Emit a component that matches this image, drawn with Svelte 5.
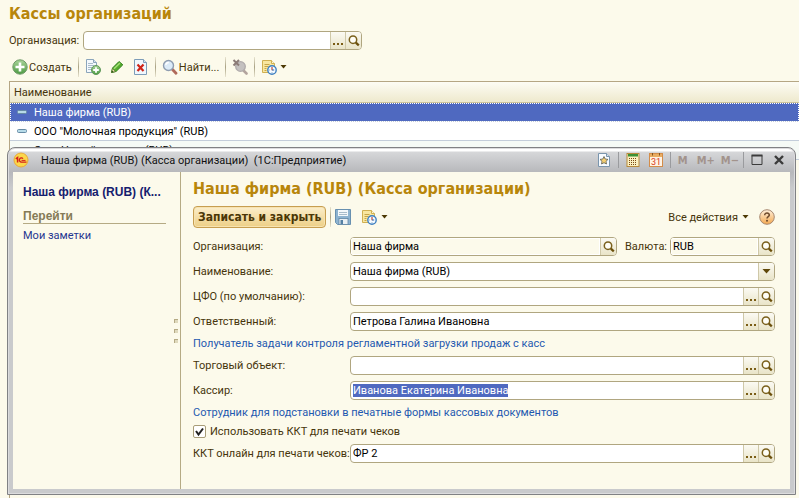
<script>
  import { onMount } from 'svelte';

  const cashDesks = ['Наша фирма (RUB)', 'ООО "Молочная продукция" (RUB)', 'Сеть Новый магазин (RUB)'];

  let filter = $state('');
  let selected = $state(0);
  let useKkt = $state(true);
  let form = $state({
    org: 'Наша фирма',
    currency: 'RUB',
    name: 'Наша фирма (RUB)',
    cfo: '',
    owner: 'Петрова Галина Ивановна',
    shop: '',
    cashier: 'Иванова Екатерина Ивановна',
    kkt: 'ФР 2'
  });

  onMount(() => {
    const el = document.getElementById('cashier');
    el.focus();
    el.select();
  });
</script>

{#snippet lens()}
  <svg width="12" height="12" viewBox="0 0 12 12" aria-hidden="true">
    <circle cx="5" cy="4.7" r="3.7" fill="#fffef6" stroke="#7a601c" stroke-width="1.5" />
    <path d="M7.8 7.6 10.8 10.4" stroke="#6b4f0a" stroke-width="2.2" />
  </svg>
{/snippet}

{#snippet arrow()}
  <svg class="arrow" width="7" height="4" viewBox="0 0 7 4" aria-hidden="true"><path d="M0.5 0h6L3.5 3.5z" fill="#4d3905" /></svg>
{/snippet}

{#snippet scheduleIcon()}
  <svg width="16" height="16" viewBox="0 0 16 16" aria-hidden="true">
    <path d="M1.5 1.5h9l3 3v9h-12z" fill="#f8e7a0" stroke="#d0b052" />
    <path d="M10.5 1.5v3h3" fill="#fff8d8" stroke="#d0b052" />
    <path d="M3.5 5.5h5M3.5 7.5h4M3.5 9.5h2M3.5 11.5h2" stroke="#c6a548" />
    <circle cx="11" cy="11" r="4.2" fill="#f4faff" stroke="#3d7fc0" stroke-width="1.4" />
    <path d="M11 8v3.300" fill="none" stroke="#c0493a" stroke-width="1.200" />
    <path d="M11 11h2.200" stroke="#2d67a8" />
    <path d="M8 11h1M11 13v1" stroke="#9ab8d6" />
  </svg>
{/snippet}

{#snippet field(id, key, mode)}
  <div class="field" class:locked={mode === 'locked'}>
    <input {id} type="text" bind:value={form[key]} readonly={mode === 'locked'} autocomplete="off" spellcheck="false" />
    {#if mode === 'full'}
      <button type="button" class="pick" aria-label="Выбрать"><i></i><i></i><i></i></button>
    {/if}
    {#if mode === 'list'}
      <button type="button" class="drop" aria-label="Список">
        <svg width="9" height="5" viewBox="0 0 9 5" aria-hidden="true"><path d="M0.5 0h8L4.5 4.5z" fill="#5f4708" /></svg>
      </button>
    {:else}
      <button type="button" class="open" aria-label="Открыть">{@render lens()}</button>
    {/if}
  </div>
{/snippet}

<div class="page">
  <h1>Кассы организаций</h1>

  <div class="filter">
    <label for="filter">Организация:</label>
    <div class="field">
      <input id="filter" type="text" bind:value={filter} autocomplete="off" />
      <button type="button" class="pick" aria-label="Выбрать"><i></i><i></i><i></i></button>
      <button type="button" class="open" aria-label="Открыть">{@render lens()}</button>
    </div>
  </div>

  <div class="toolbar">
    <button type="button" class="tool">
      <svg width="16" height="16" viewBox="0 0 16 16" aria-hidden="true">
        <defs>
          <linearGradient id="green" x1="0" y1="0" x2="0" y2="1"><stop offset="0" stop-color="#a9d49a" /><stop offset="1" stop-color="#4c9a41" /></linearGradient>
        </defs>
        <circle cx="8" cy="8" r="7.2" fill="url(#green)" stroke="#6f9a68" />
        <path d="M8 3.5v9M3.5 8h9" stroke="#fff" stroke-width="2.6" />
      </svg>
      Создать
    </button>
    <span class="sep"></span>
    <button type="button" class="tool" aria-label="Скопировать">
      <svg width="16" height="16" viewBox="0 0 16 16" aria-hidden="true">
        <path d="M1.5 .5h7l3 3v10h-10z" fill="#f4f9fd" stroke="#8ba5bb" />
        <path d="M8.5 .5v3h3" fill="#d5e4ef" stroke="#8ba5bb" />
        <path d="M3 4.5h5M3 6.5h6M3 8.5h4M3 10.5h3" stroke="#a9bccb" />
        <circle cx="11" cy="11" r="4.5" fill="url(#green)" stroke="#5f985a" />
        <path d="M11 8.2v5.6M8.2 11h5.6" stroke="#fff" stroke-width="1.8" />
      </svg>
    </button>
    <button type="button" class="tool" aria-label="Изменить">
      <svg width="16" height="16" viewBox="0 0 16 16" aria-hidden="true">
        <path d="M2.500 13.500 3.500 9 10 2.500l3.800 3.300L7 12.500z" fill="#54ab2c" stroke="#2f7f1c" />
        <path d="M5 9.800 11 4" stroke="#a5df78" stroke-width="1.500" />
        <path d="M2.500 13.500 3.500 9.500 6.500 12.500z" fill="#eadfae" stroke="#5c7a32" stroke-width=".7" />
        <path d="m2.500 13.500.5-2 1.500 1.500z" fill="#26460f" />
      </svg>
    </button>
    <button type="button" class="tool" aria-label="Удалить">
      <svg width="16" height="16" viewBox="0 0 16 16" aria-hidden="true">
        <path d="M1.5 .5h9l3 3v12h-12z" fill="#f0f7fd" stroke="#7d9cb8" />
        <path d="M10.5 .5v3h3" fill="#d5e4ef" stroke="#7d9cb8" />
        <path d="m4.5 5.5 6 6.500m0-6.500-6 6.500" stroke="#cf2418" stroke-width="2.200" />
      </svg>
    </button>
    <span class="sep"></span>
    <button type="button" class="tool">
      <svg width="16" height="16" viewBox="0 0 16 16" aria-hidden="true">
        <path d="m10.500 10.500 3.500 3.700" stroke="#b06a5a" stroke-width="2.800" stroke-linecap="round" />
        <circle cx="6.500" cy="6.500" r="5" fill="#dcebf8" stroke="#8f9db0" stroke-width="1.400" />
        <path d="M3.800 6a3 3 0 0 1 3-2.500" stroke="#fff" stroke-width="1.300" fill="none" />
      </svg>
      Найти...
    </button>
    <span class="sep"></span>
    <button type="button" class="tool" aria-label="Отменить поиск">
      <svg width="16" height="16" viewBox="0 0 16 16" aria-hidden="true">
        <path d="m11 11 3.500 3.500" stroke="#b3a49e" stroke-width="2.600" stroke-linecap="round" />
        <circle cx="8.500" cy="7.500" r="4.800" fill="#c4c1c0" stroke="#b0abab" stroke-width="1.300" />
        <path d="m1.500 1 5.500 5.500m0-5.500-5.500 5.500" stroke="#8b7b77" stroke-width="2" />
      </svg>
    </button>
    <span class="sep"></span>
    <button type="button" class="tool" aria-label="Настройки списка">{@render scheduleIcon()}{@render arrow()}</button>
  </div>

  <div class="list">
    <table>
      <thead><tr><th>Наименование</th></tr></thead>
      <tbody>
        {#each cashDesks as desk, i}
          <tr class:selected={selected === i} onclick={() => (selected = i)}>
            <td>
              <span class="cell">
                <svg width="10" height="4" viewBox="0 0 10 4" aria-hidden="true"><rect x=".5" y=".5" width="9" height="3" rx="1" fill="#b7dbe8" stroke="#668ba5" /></svg>
                {desk}
              </span>
            </td>
          </tr>
        {/each}
      </tbody>
    </table>
  </div>

  <section class="window" aria-label="Касса организации">
    <header>
      <svg class="logo" width="16" height="16" viewBox="0 0 16 16" aria-hidden="true">
        <circle cx="8" cy="8" r="7" fill="#fbd74a" stroke="#e8a93c" />
        <path d="M2.8 6.800 4.600 5.500v5" fill="none" stroke="#d3201c" stroke-width="1.500" />
        <path d="M10 6.600a2.100 2.100 0 1 0-1.500 3.500h5" fill="none" stroke="#d3201c" stroke-width="1.400" />
        <path d="M8.500 8.400h4" stroke="#d3201c" />
      </svg>
      <span class="caption">Наша фирма (RUB) (Касса организации)&nbsp; (1С:Предприятие)</span>
      <button type="button" class="tool" aria-label="В избранное">
        <svg width="14" height="14" viewBox="0 0 14 14" aria-hidden="true">
          <path d="M1.5 .5h8l3 3v10h-11z" fill="#f7fbff" stroke="#7a95ad" />
          <path d="M9.5 .5v3h3" fill="#d5e4ef" stroke="#7a95ad" />
          <path d="m7 3.500 1.200 2.500 2.800.4-2 1.900.5 2.700L7 9.700 4.500 11 5 8.300l-2-1.900 2.800-.4z" fill="#f5cf72" stroke="#5b5d55" stroke-width=".8" />
        </svg>
      </button>
      <span class="sep dark"></span>
      <button type="button" class="tool" aria-label="Калькулятор">
        <svg width="14" height="14" viewBox="0 0 14 14" aria-hidden="true">
          <rect x="1" y=".5" width="12" height="13" fill="#fbf0c0" stroke="#b88a3a" />
          <rect x="2" y="1" width="10" height="2.500" fill="#3c9136" />
          <path d="M3 5.500h8M3 7.500h8M3 9.500h8M3 11.500h8" stroke="#7a4a12" stroke-dasharray="1 1" stroke-width="1.100" />
        </svg>
      </button>
      <button type="button" class="tool" aria-label="Календарь">
        <svg width="14" height="14" viewBox="0 0 14 14" aria-hidden="true">
          <rect x=".5" y=".5" width="13" height="13" fill="#fff3e4" stroke="#d38c49" />
          <rect x="1" y="1" width="12" height="3" fill="#e9ad63" />
          <path d="M3.500 0v2.500M10.500 0v2.500" stroke="#7d5220" />
          <text x="7" y="12" text-anchor="middle" font-size="9" fill="#d83a20">31</text>
        </svg>
      </button>
      <span class="sep dark"></span>
      <button type="button" class="memory" disabled>M</button>
      <button type="button" class="memory wide" disabled>M+</button>
      <button type="button" class="memory wide" disabled>M−</button>
      <span class="sep dark"></span>
      <button type="button" class="tool" aria-label="Развернуть">
        <svg width="12" height="12" viewBox="0 0 12 12" aria-hidden="true"><path d="M1 1.500v9h10v-9z" fill="none" stroke="#3b3b3b" /><path d="M.5 1.500h11" stroke="#3b3b3b" stroke-width="2" /></svg>
      </button>
      <button type="button" class="tool close" aria-label="Закрыть">
        <svg width="10" height="10" viewBox="0 0 10 10" aria-hidden="true"><path d="m1 1 8 8m0-8L1 9" stroke="#3b3b3b" stroke-width="2.400" /></svg>
      </button>
    </header>

    <div class="body">
      <nav>
        <div class="links">
          <a class="current" href="#main">Наша фирма (RUB) (К...</a>
          <h3>Перейти</h3>
          <a href="#notes">Мои заметки</a>
        </div>
        <div class="grip"><i></i><i></i><i></i></div>
      </nav>

      <main>
        <h2>Наша фирма (RUB) (Касса организации)</h2>
        <div class="commands">
          <button type="button" class="primary">Записать и закрыть</button>
          <span class="sep"></span>
          <button type="button" class="tool save" aria-label="Записать">
            <svg width="16" height="16" viewBox="0 0 16 16" aria-hidden="true">
              <path d="M.5 .5h15v15h-13l-2-2z" fill="#8db3d0" stroke="#6890b0" />
              <rect x="3" y="1" width="10" height="6" fill="#f3f8fb" />
              <path d="M4 3.500h8M4 5.500h8" stroke="#a8bccb" />
              <rect x="4" y="9.500" width="9" height="6" fill="#e9eff3" stroke="#5f86a5" stroke-width=".8" />
              <rect x="5.500" y="11" width="2.500" height="4" fill="#5580a3" />
            </svg>
          </button>
          <button type="button" class="tool" aria-label="Задания">{@render scheduleIcon()}{@render arrow()}</button>
          <button type="button" class="tool all">Все действия {@render arrow()}</button>
          <button type="button" class="tool" aria-label="Справка">
            <svg width="16" height="16" viewBox="0 0 16 16" aria-hidden="true">
              <defs><linearGradient id="help" x1="0" y1="0" x2="0" y2="1"><stop offset="0" stop-color="#fff0dc" /><stop offset="1" stop-color="#f4a950" /></linearGradient></defs>
              <circle cx="8" cy="8" r="7.300" fill="url(#help)" stroke="#a78870" />
              <path d="M5.700 6.200c0-3 4.800-2.800 4.600-.1C10.200 7.600 8 7.700 8 9.500" fill="none" stroke="#6e4a2c" stroke-width="1.500" />
              <circle cx="8" cy="11.800" r="1" fill="#6e4a2c" />
            </svg>
          </button>
        </div>

        <div class="form">
          <div class="row">
            <label for="org">Организация:</label>
            {@render field('org', 'org', 'locked')}
            <label class="short" for="currency">Валюта:</label>
            <div class="currency">{@render field('currency', 'currency', 'locked')}</div>
          </div>
          <div class="row">
            <label for="name">Наименование:</label>
            {@render field('name', 'name', 'list')}
          </div>
          <div class="row">
            <label for="cfo">ЦФО (по умолчанию):</label>
            {@render field('cfo', 'cfo', 'full')}
          </div>
          <div class="row">
            <label for="owner">Ответственный:</label>
            {@render field('owner', 'owner', 'full')}
          </div>
          <a href="#task">Получатель задачи контроля регламентной загрузки продаж с касс</a>
          <div class="row">
            <label for="shop">Торговый объект:</label>
            {@render field('shop', 'shop', 'full')}
          </div>
          <div class="row">
            <label for="cashier">Кассир:</label>
            {@render field('cashier', 'cashier', 'full')}
          </div>
          <a href="#employee">Сотрудник для подстановки в печатные формы кассовых документов</a>
          <label class="check">
            <span class="box">
              <input type="checkbox" bind:checked={useKkt} />
              {#if useKkt}
                <svg width="13" height="13" viewBox="0 0 13 13" aria-hidden="true"><path d="m3 6 2.500 3.500L10 3.500" fill="none" stroke="#222" stroke-width="2" /></svg>
              {/if}
            </span>
            Использовать ККТ для печати чеков
          </label>
          <div class="row">
            <label for="kkt">ККТ онлайн для печати чеков:</label>
            {@render field('kkt', 'kkt', 'full')}
          </div>
        </div>
      </main>
    </div>
  </section>
</div>

<style>
  :global(body) {
    margin: 0;
    background: #fcfaeb;
  }
  .page {
    position: relative;
    display: flex;
    flex-direction: column;
    box-sizing: border-box;
    min-height: 100vh;
    padding: 4px 0 0 9px;
    overflow: hidden;
    background: #fcfaeb;
    color: #46350c;
    font: 11px/13px Roboto, 'Liberation Sans', sans-serif;
  }
  button,
  input {
    margin: 0;
    padding: 0;
    border: 0;
    background: none;
    color: inherit;
    font: inherit;
  }
  svg {
    display: block;
    flex: none;
  }
  h1,
  h2 {
    margin: 0;
    color: #b8860b;
    font: bold 16px/20px 'DejaVu Sans Condensed', 'DejaVu Sans', sans-serif;
  }
  a {
    color: #1f59b0;
    text-decoration: none;
  }

  .filter {
    display: flex;
    align-items: center;
    gap: 4px;
    margin-top: 7px;
  }
  .filter .field {
    flex: 0 1 279px;
  }

  .field {
    display: flex;
    flex: 1;
    box-sizing: border-box;
    min-width: 0;
    height: 19px;
    overflow: hidden;
    border: 1px solid #b0a680;
    border-radius: 4px;
    background: #fff;
  }
  .field input {
    flex: 1;
    min-width: 0;
    padding: 0 2px;
    outline: 0;
    color: #000;
  }
  .field.locked input {
    background: #fcfaeb;
    box-shadow: inset 0 0 0 1px #fff;
  }
  .field input::selection {
    background: #4f69c0;
    color: #fff;
  }
  .field button {
    display: flex;
    flex: none;
    align-items: center;
    justify-content: center;
    box-sizing: border-box;
    width: 16px;
    border-left: 1px solid #cfc8a8;
    background: linear-gradient(#fbfaf3, #e9e4c8);
  }
  .field .pick {
    align-items: flex-end;
    gap: 2px;
    width: 15px;
    padding-bottom: 4px;
  }
  .pick i {
    width: 2px;
    height: 2px;
    background: #7a5c14;
  }

  .toolbar {
    display: flex;
    align-items: center;
    gap: 8px;
    height: 22px;
    margin: 6px 0 3px 3px;
  }
  .tool {
    display: flex;
    align-items: center;
    gap: 2px;
  }
  .toolbar .tool {
    gap: 1px;
  }
  .toolbar .sep {
    margin: 0 -2px;
  }
  .arrow {
    margin-left: 2px;
  }
  .sep {
    flex: none;
    width: 1px;
    height: 20px;
    background: linear-gradient(#e8e4d0, #a9a284, #e8e4d0);
  }

  .list {
    flex: 1;
    border: solid #b5a684;
    border-width: 1px 0 0 1px;
  }
  table {
    width: 100%;
    border-collapse: collapse;
  }
  th {
    height: 20px;
    padding: 0 4px;
    border-bottom: 1px solid #cdc49c;
    background: linear-gradient(#fdfcf4, #eee9cd);
    font-weight: normal;
    text-align: left;
  }
  td {
    height: 18px;
    padding: 0 7px;
    border-bottom: 1px solid #c3cdda;
    background: #fff;
    color: #000;
  }
  tr:nth-child(3) td {
    background: #f5faf6;
  }
  tr.selected td {
    background: #4f69c0;
    color: #fff;
    outline: 1px dotted #fff;
    outline-offset: -1px;
  }
  .cell {
    display: flex;
    align-items: center;
    gap: 7px;
  }

  .window {
    position: absolute;
    top: 147px;
    right: 3px;
    left: 7px;
    padding: 0 5px 5px;
    border: 1px solid #808184;
    border-radius: 8px 8px 0 0;
    background: linear-gradient(#fff 0, #fff 3px, #d6d7d9 4px, #b7b8bb 24px, #c9cacc 40px);
    box-shadow: inset 0 0 0 1px #dcdcde;
  }
  header {
    display: flex;
    align-items: center;
    gap: 9px;
    height: 24px;
    color: #111;
  }
  .caption {
    flex: 1;
    min-width: 0;
    margin-left: 3px;
    overflow: hidden;
    white-space: nowrap;
  }
  .sep.dark {
    height: 16px;
    margin: 0 -2px;
    background: #9a9b9e;
  }
  .memory {
    color: #a2938c;
    font: bold 11px/13px 'DejaVu Sans Condensed', 'DejaVu Sans', sans-serif;
  }
  .memory.wide {
    margin-right: -3px;
  }
  .close {
    margin: 0 6px 0 2px;
  }

  .body {
    display: flex;
    background: #fcfaeb;
  }
  nav {
    display: flex;
    flex: none;
    box-sizing: border-box;
    width: 168px;
    border-right: 1px solid #b5aa84;
  }
  .links {
    display: flex;
    flex: 1;
    flex-direction: column;
    min-width: 0;
    padding: 13px 0 0 10px;
  }
  .links a {
    color: #1f3590;
  }
  .links .current {
    color: #14206e;
    font: bold 12px/14px 'Liberation Sans', sans-serif;
    white-space: nowrap;
  }
  h3 {
    margin: 11px 0 5px;
    border-bottom: 1px solid #b5aa84;
    color: #857a56;
    font: bold 12px/13px 'Liberation Sans', sans-serif;
  }
  .grip {
    display: flex;
    flex: none;
    flex-direction: column;
    justify-content: center;
    gap: 6px;
    width: 6px;
    margin-left: 8px;
  }
  .grip i {
    width: 4px;
    height: 4px;
    border: solid #b5aa84;
    border-width: 1px 0 0 1px;
    box-sizing: border-box;
    background: #dfd9bd;
  }

  main {
    flex: 1;
    min-width: 0;
    padding: 7px 15px 26px 12px;
  }
  .commands {
    display: flex;
    align-items: center;
    gap: 10px;
    height: 22px;
    margin: 7px 0 9px;
  }
  .primary {
    height: 22px;
    padding: 0 4px;
    border: 1px solid #c79e50;
    border-radius: 4px;
    background: linear-gradient(#fbeecb, #edcf86);
    box-shadow: inset 0 0 0 1px #f7e3b0;
    color: #4a3606;
    font: bold 12px/14px 'DejaVu Sans Condensed', 'DejaVu Sans', sans-serif;
  }
  .commands .sep {
    margin: 0 -6px;
  }
  .all {
    margin-left: auto;
  }

  .form {
    display: flex;
    flex-direction: column;
    gap: 6px;
  }
  .row {
    display: flex;
    align-items: center;
  }
  .row label {
    flex: none;
    width: 157px;
    white-space: nowrap;
  }
  .row .short {
    width: 45px;
    margin-left: 8px;
  }
  .currency {
    display: flex;
    flex: none;
    width: 105px;
  }
  .check {
    display: flex;
    align-items: center;
    gap: 4px;
  }
  .box {
    position: relative;
    width: 13px;
    height: 13px;
  }
  .box input {
    display: block;
    box-sizing: border-box;
    width: 13px;
    height: 13px;
    appearance: none;
    border: 1px solid #a89d78;
    border-radius: 2px;
    background: #fff;
  }
  .box svg {
    position: absolute;
    inset: 0;
    pointer-events: none;
  }
</style>
